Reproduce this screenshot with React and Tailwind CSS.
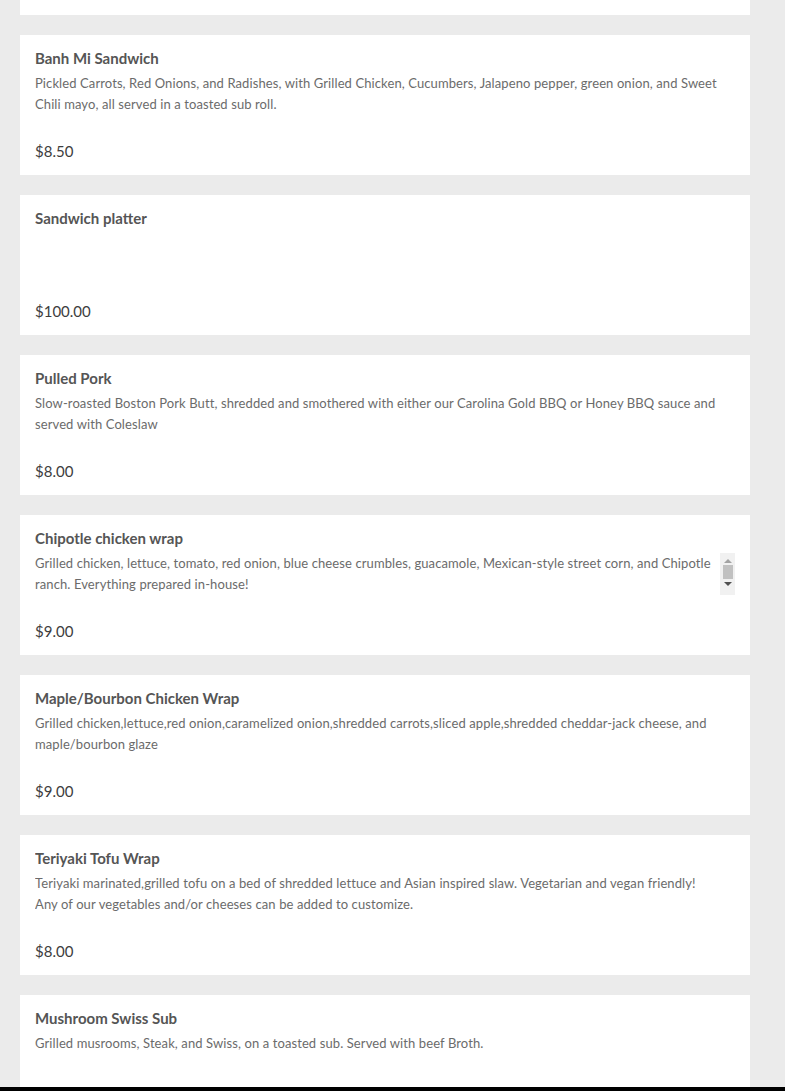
import React from "react";

const items = [
  { title: "Chicken Salad Sandwich", desc: "", price: "$10.00" },
  {
    title: "Banh Mi Sandwich",
    desc: "Pickled Carrots, Red Onions, and Radishes, with Grilled Chicken, Cucumbers, Jalapeno pepper, green onion, and Sweet Chili mayo, all served in a toasted sub roll.",
    price: "$8.50",
  },
  { title: "Sandwich platter", desc: "", price: "$100.00" },
  {
    title: "Pulled Pork",
    desc: "Slow-roasted Boston Pork Butt, shredded and smothered with either our Carolina Gold BBQ or Honey BBQ sauce and served with Coleslaw",
    price: "$8.00",
  },
  {
    title: "Chipotle chicken wrap",
    desc: "Grilled chicken, lettuce, tomato, red onion, blue cheese crumbles, guacamole, Mexican-style street corn, and Chipotle ranch. Everything prepared in-house!",
    price: "$9.00",
    scroll: true,
  },
  {
    title: "Maple/Bourbon Chicken Wrap",
    desc: "Grilled chicken,lettuce,red onion,caramelized onion,shredded carrots,sliced apple,shredded cheddar-jack cheese, and maple/bourbon glaze",
    price: "$9.00",
  },
  {
    title: "Teriyaki Tofu Wrap",
    desc: (
      <>
        Teriyaki marinated,grilled tofu on a bed of shredded lettuce and Asian inspired slaw. Vegetarian and vegan friendly!
        <br />
        Any of our vegetables and/or cheeses can be added to customize.
      </>
    ),
    price: "$8.00",
  },
  {
    title: "Mushroom Swiss Sub",
    desc: "Grilled musrooms, Steak, and Swiss, on a toasted sub. Served with beef Broth.",
    price: "$9.50",
  },
];

function Scrollbar() {
  return (
    <div className="w-[15px] h-[42px] bg-[#f1f1f1] flex flex-col items-center shrink-0">
      <div className="h-[12px] flex items-end justify-center pb-[2px]">
        <div className="w-0 h-0 border-l-[4px] border-r-[4px] border-b-[4px] border-l-transparent border-r-transparent border-b-[#a3a3a3]" />
      </div>
      <div className="w-[10px] h-[14px] bg-[#c1c1c1]" />
      <div className="h-[12px] flex items-start justify-center pt-[3px]">
        <div className="w-0 h-0 border-l-[4px] border-r-[4px] border-t-[4px] border-l-transparent border-r-transparent border-t-[#505050]" />
      </div>
    </div>
  );
}

function Card({ item }) {
  return (
    <div className="bg-white h-[140px] shrink-0 flex flex-col px-[15px] pt-[13px] pb-[14px]">
      <div className="text-[15px] leading-[20px] font-bold text-[#555555] truncate">{item.title}</div>
      <div className="mt-[5px] h-[42px] flex">
        <div className="flex-1 text-[13px] leading-[21px] tracking-[0.1px] text-[#6b6b6b] overflow-hidden">{item.desc}</div>
        {item.scroll && <Scrollbar />}
      </div>
      <div className="mt-auto text-[15px] leading-[20px] text-[#3d3d3d]">{item.price}</div>
    </div>
  );
}

export default function App() {
  return (
    <div
      className="h-[1091px] w-[785px] bg-[#ebebeb] flex flex-col overflow-hidden"
      style={{ fontFamily: "Lato, 'Liberation Sans', sans-serif" }}
    >
      <div className="flex-1 overflow-hidden">
        <div className="mt-[-125px] ml-[20px] w-[730px] flex flex-col gap-[20px]">
          {items.map((it, i) => (
            <Card key={i} item={it} />
          ))}
        </div>
      </div>
      <div className="h-[4px] bg-black shrink-0" />
    </div>
  );
}
